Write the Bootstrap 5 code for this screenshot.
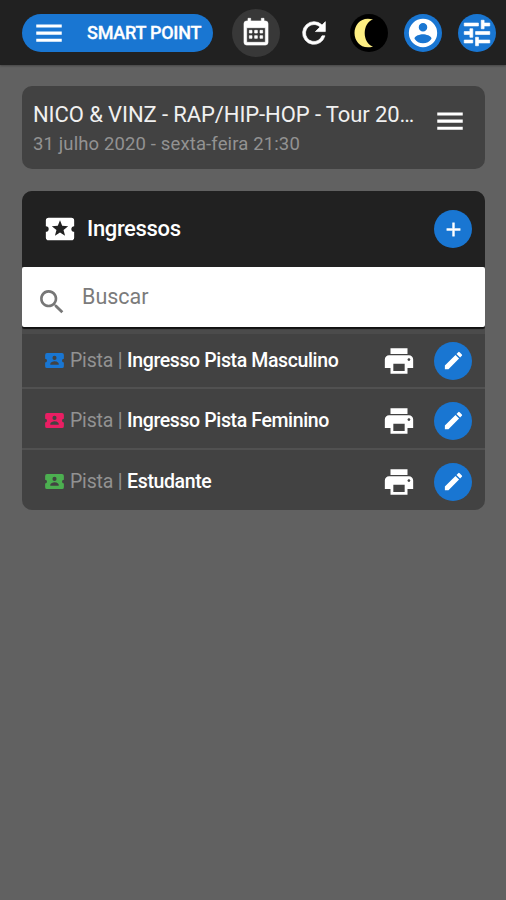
<!DOCTYPE html>
<html lang="pt-BR">
<head>
<meta charset="utf-8">
<meta name="viewport" content="width=device-width, initial-scale=1">
<title>Smart Point</title>
<link href="https://cdn.jsdelivr.net/npm/bootstrap@5.3.0/dist/css/bootstrap.min.css" rel="stylesheet">
<style>
body{background:#616161;font-family:Roboto,sans-serif;min-height:100vh;overflow:hidden}
svg{display:block;fill:currentColor;flex-shrink:0}
.topbar{background:#212121;height:65px;padding:0 10px 0 22px;box-shadow:0 1px 2px rgba(0,0,0,.3)}
.brand{width:191px;height:38px;padding:0 0 0 10px;font-size:18px;font-weight:500;line-height:38px;background:#1976d2!important;border:0;color:#fff}
.brand span{margin:1px 0 0 21px;letter-spacing:-.25px;white-space:nowrap;-webkit-text-stroke:.3px}
.bold-icon{stroke:currentColor;stroke-width:.5}
.round{width:38px;height:38px;padding:0;border:0;border-radius:50%;display:flex;align-items:center;justify-content:center;color:#fff;flex-shrink:0}
.blue{background:#1976d2}
.cal{width:48px;height:48px;background:#383838;margin-left:19px;padding-right:1px}
.reload{margin-left:16px;padding-right:2px}
.moon{background:#000;margin-left:16px;color:#fdee82}
.user{margin-left:16px}
.tune{margin-left:16px}
.page{padding:21px 21px 0 22px}
.panel{background:#424242;border:0;border-radius:10px;color:#fff;overflow:hidden}
.event{height:83px;padding:13px 18px 0 11px}
.event-name{font-size:22px;line-height:31px;color:#f0f0f0;width:385px;letter-spacing:-.09px}
.event-date{font-size:18.500px;line-height:28px;color:#929292;letter-spacing:.13px}
.tickets{margin-top:22px;height:319px}
.head{background:#212121;height:76px;padding:0 13px 0 20px}
.head h1{font-size:22px;font-weight:500;margin:0 0 1px 9px;line-height:30px;letter-spacing:-.35px}
.search{height:60px;background:#fff;border-radius:2px;border:0;padding:0 0 0 14px;box-shadow:0 2px 1px #111;color:#777;position:relative}
.search svg{margin-top:9px}
.search input{font-size:21.500px;border:0;background:none;padding:0;margin:0 0 0 14px}
.search input::placeholder{color:#7b7b7b;opacity:1}
.list-strip{height:7px;background:#4b4b4b}
.ticket{height:61px;border-top:2px solid #515151;padding:4px 13px 0 23px;font-size:19.500px;letter-spacing:-.18px;color:#fff}
.ticket:first-child{height:53px;border-top:0;padding-top:0}
.ticket .sector{color:#929292;margin-left:6px;white-space:pre}
.ticket .kind{font-weight:500;white-space:nowrap;letter-spacing:-.38px}
.ticket .print{margin-left:auto;margin-right:18px}
</style>
<script src="https://cdn.jsdelivr.net/npm/bootstrap@5.3.0/dist/js/bootstrap.bundle.min.js"></script>
</head>
<body>
<svg class="d-none" xmlns="http://www.w3.org/2000/svg">
<symbol id="menu" viewBox="0 0 24 24"><path d="M3 6h18v2.200H3zm0 5h18v2.200H3zm0 5h18v2.200H3z"/></symbol>
<symbol id="pass" viewBox="2 4 20 16"><path fill-rule="evenodd" d="M4 4h16a2 2 0 0 1 2 2v4a2 2 0 0 0 0 4v4a2 2 0 0 1-2 2H4a2 2 0 0 1-2-2v-4a2 2 0 0 0 0-4V6a2 2 0 0 1 2-2zm8 3a2.200 2.200 0 1 0 0 4.400A2.200 2.200 0 0 0 12 7zM7.500 16.500h9v-1c0-1.900-3-2.800-4.500-2.800s-4.500.9-4.500 2.800z"/></symbol>
<symbol id="printer" viewBox="0 0 24 24"><path d="M19 8H5c-1.660 0-3 1.340-3 3v6h4v4h12v-4h4v-6c0-1.660-1.340-3-3-3zm-3 11H8v-5h8v5zm3-7c-.55 0-1-.45-1-1s.45-1 1-1 1 .45 1 1-.45 1-1 1zm-1-9H6v4h12V3z"/></symbol>
<symbol id="pencil" viewBox="0 0 24 24"><path d="M3 17.250V21h3.750L17.810 9.940l-3.750-3.750L3 17.250zM20.710 7.040a1 1 0 0 0 0-1.410l-2.340-2.340a1 1 0 0 0-1.410 0l-1.830 1.830 3.750 3.750 1.830-1.830z"/></symbol>
</svg>

<nav class="topbar d-flex align-items-center">
  <button class="btn brand rounded-pill d-flex align-items-center" type="button">
    <svg width="34" height="34"><use href="#menu"/></svg><span>SMART POINT</span>
  </button>
  <button class="round cal" type="button" aria-label="Agenda"><svg class="bold-icon" width="32" height="32" viewBox="0 0 24 24"><path d="M9 10v2H7v-2h2m4 0v2h-2v-2h2m4 0v2h-2v-2h2m2-7a2 2 0 0 1 2 2v14a2 2 0 0 1-2 2H5a2 2 0 0 1-2-2V5a2 2 0 0 1 2-2h1V1h2v2h8V1h2v2h1m0 16V8H5v11h14M9 14v2H7v-2h2m4 0v2h-2v-2h2m4 0v2h-2v-2h2z"/></svg></button>
  <button class="round reload bg-transparent" type="button" aria-label="Atualizar"><svg class="bold-icon" width="34" height="34" viewBox="0 0 24 24"><path d="M17.650 6.350A7.960 7.960 0 0 0 12 4a8 8 0 1 0 7.730 10h-2.080A6 6 0 1 1 12 6c1.660 0 3.140.69 4.220 1.780L13 11h7V4l-2.350 2.350z"/></svg></button>
  <button class="round moon" type="button" aria-label="Tema"><svg width="38" height="38" viewBox="0 0 38 38"><path d="M23 5.500C12 2 4.500 10 4.500 19s7.500 17 18.500 13.500C12 29 12 9 23 5.500z"/></svg></button>
  <button class="round user blue" type="button" aria-label="Conta"><svg width="34" height="34" viewBox="0 0 24 24"><path d="M12 2a10 10 0 1 0 0 20 10 10 0 0 0 0-20zm0 3a3 3 0 1 1 0 6 3 3 0 0 1 0-6zm0 14.200a7.200 7.200 0 0 1-6-3.220c.03-1.990 4-3.080 6-3.080s5.970 1.090 6 3.080a7.200 7.200 0 0 1-6 3.220z"/></svg></button>
  <button class="round tune blue" type="button" aria-label="Ajustes"><svg class="bold-icon" width="34" height="34" viewBox="0 0 24 24"><path d="M3 17v2h6v-2H3zM3 5v2h10V5H3zm10 16v-2h8v-2h-8v-2h-2v6h2zM7 9v2H3v2h4v2h2V9H7zm14 4v-2H11v2h10zm-6-4h2V7h4V5h-4V3h-2v6z"/></svg></button>
</nav>

<main class="page">
  <section class="card panel event flex-row justify-content-between">
    <div>
      <div class="event-name text-nowrap">NICO &amp; VINZ - RAP/HIP-HOP - Tour 20…</div>
      <div class="event-date">31 julho 2020 - sexta-feira 21:30</div>
    </div>
    <svg class="mt-1" width="34" height="36" aria-label="Menu"><use href="#menu"/></svg>
  </section>

  <section class="card panel tickets">
    <header class="head d-flex align-items-center">
      <svg width="36" height="34" viewBox="0 0 24 24"><path fill-rule="evenodd" d="M20 12c0-1.100.9-2 2-2V6a2 2 0 0 0-2-2H4a2 2 0 0 0-1.990 2v4a2 2 0 1 1 0 4v4A2 2 0 0 0 4 20h16a2 2 0 0 0 2-2v-4a2 2 0 0 1-2-2zm-4.420 4.800L12 14.500l-3.580 2.300 1.080-4.120-3.290-2.690 4.240-.25L12 5.800l1.540 3.950 4.240.25-3.290 2.690 1.090 4.110z"/></svg>
      <h1>Ingressos</h1>
      <button class="round blue ms-auto" type="button" aria-label="Adicionar"><svg class="bold-icon" width="23" height="23" viewBox="0 0 24 24"><path d="M19 13h-6v6h-2v-6H5v-2h6V5h2v6h6z"/></svg></button>
    </header>
    <div class="search d-flex align-items-center flex-shrink-0">
      <svg width="32" height="32" viewBox="0 0 24 24"><path d="M15.500 14h-.79l-.28-.27a6.500 6.500 0 1 0-.7.7l.27.28v.79l5 4.990L20.490 19l-4.990-5zm-6 0a4.500 4.500 0 1 1 0-9 4.500 4.500 0 0 1 0 9z"/></svg>
      <input type="text" placeholder="Buscar" aria-label="Buscar">
    </div>
    <div class="list-strip flex-shrink-0"></div>
    <div>
      <div class="ticket d-flex align-items-center">
        <svg width="19" height="15" style="color:#1976d2"><use href="#pass"/></svg>
        <span class="sector">Pista | </span><span class="kind">Ingresso Pista Masculino</span>
        <svg class="print" width="34" height="34"><use href="#printer"/></svg>
        <button class="round blue" type="button" aria-label="Editar"><svg width="23" height="23"><use href="#pencil"/></svg></button>
      </div>
      <div class="ticket d-flex align-items-center">
        <svg width="19" height="15" style="color:#e91e63"><use href="#pass"/></svg>
        <span class="sector">Pista | </span><span class="kind">Ingresso Pista Feminino</span>
        <svg class="print" width="34" height="34"><use href="#printer"/></svg>
        <button class="round blue" type="button" aria-label="Editar"><svg width="23" height="23"><use href="#pencil"/></svg></button>
      </div>
      <div class="ticket d-flex align-items-center">
        <svg width="19" height="15" style="color:#4caf50"><use href="#pass"/></svg>
        <span class="sector">Pista | </span><span class="kind">Estudante</span>
        <svg class="print" width="34" height="34"><use href="#printer"/></svg>
        <button class="round blue" type="button" aria-label="Editar"><svg width="23" height="23"><use href="#pencil"/></svg></button>
      </div>
    </div>
  </section>
</main>
</body>
</html>
